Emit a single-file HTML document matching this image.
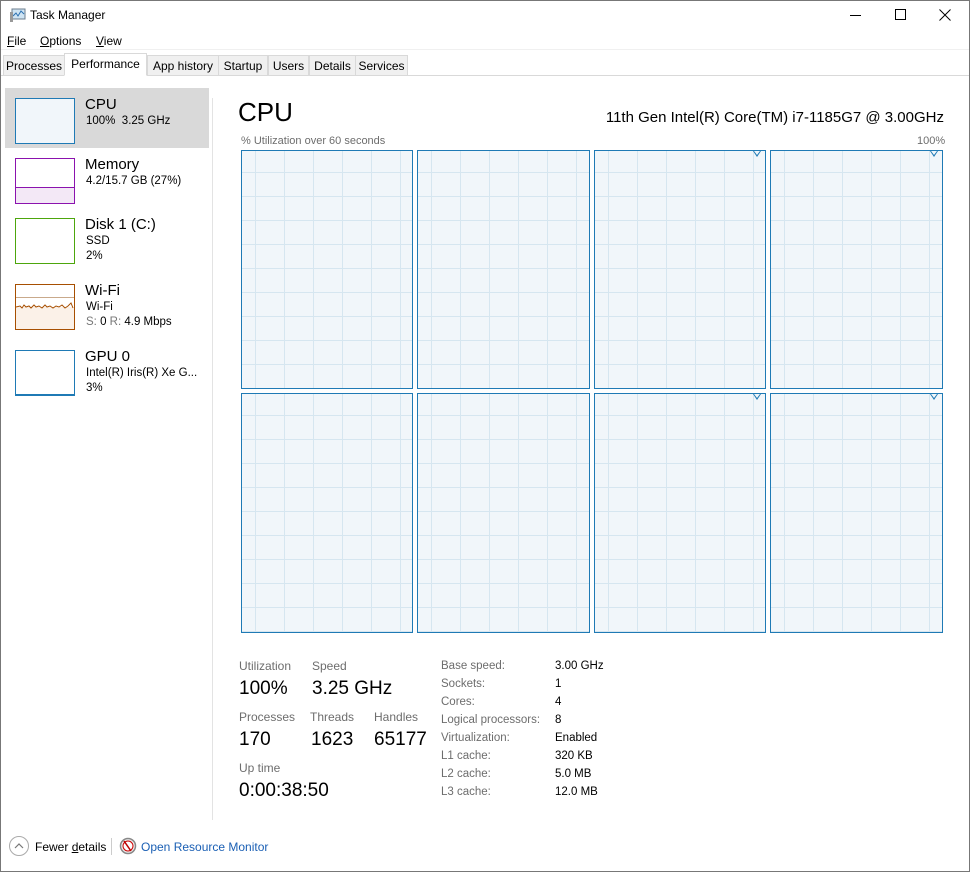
<!DOCTYPE html><html><head><style>
*{margin:0;padding:0;box-sizing:border-box}
body{width:970px;height:872px;background:#fff;font-family:"Liberation Sans",sans-serif;position:relative;overflow:hidden}
.a{position:absolute;white-space:nowrap}
.g{position:absolute;border:1px solid #1f7ab5;background-color:#f1f6fa;background-image:linear-gradient(90deg,#d6e6f0 1px,transparent 1px),linear-gradient(#d6e6f0 1px,transparent 1px);background-size:29px 24px;background-position:13px 21px}
.tab{position:absolute;top:55px;height:21px;border:1px solid #d9d9d9;background:#f0f0f0;font-size:12px;padding:3px 0 0;text-align:center;color:#000}
.th{position:absolute;border:1px solid;width:60px;height:46px;left:15px}
.s{font-size:12px;color:#6d6d6d}
.b{font-size:19px;color:#000}
.k{font-size:11.5px;color:#6d6d6d}
.v{font-size:11.5px;color:#000}
.tri{position:absolute;top:0;right:4px;width:0;height:0;border-left:4px solid transparent;border-right:4px solid transparent;border-top:6px solid #1f7ab5}
.tri:after{content:"";position:absolute;left:-3px;top:-6px;border-left:3px solid transparent;border-right:3px solid transparent;border-top:4px solid #f1f6fa}
</style></head><body>
<div class="a" style="left:0;top:0;width:970px;height:872px;border:1px solid #777"></div>
<svg class="a" style="left:9px;top:8px" width="17" height="15"><rect x="3" y="1" width="13" height="10" fill="#cfe4f3" stroke="#6b7d8c"/><polyline points="4,8 7,5 9,8 12,3 15,6" fill="none" stroke="#2a6fb0"/><rect x="1" y="4" width="3" height="10" fill="#999"/></svg>
<div class="a" style="left:30px;top:8px;font-size:12px">Task Manager</div>
<div class="a" style="left:850px;top:15px;width:11px;height:1px;background:#000"></div>
<div class="a" style="left:895px;top:9px;width:11px;height:11px;border:1px solid #000"></div>
<svg class="a" style="left:939px;top:9px" width="12" height="12"><path d="M0.5 0.5L11.5 11.5M11.5 0.5L0.5 11.5" stroke="#000" stroke-width="1"/></svg>
<div class="a" style="left:7px;top:34px;font-size:12px"><u>F</u>ile</div>
<div class="a" style="left:40px;top:34px;font-size:12px"><u>O</u>ptions</div>
<div class="a" style="left:96px;top:34px;font-size:12px"><u>V</u>iew</div>
<div class="a" style="left:1px;top:49px;width:968px;height:1px;background:#f0f0f0"></div>
<div class="a" style="left:1px;top:75px;width:968px;height:1px;background:#d9d9d9"></div>
<div class="tab" style="left:3px;width:62px">Processes</div>
<div class="tab" style="left:64px;top:53px;height:23px;width:83px;background:#fff;border-bottom-color:#fff">Performance</div>
<div class="tab" style="left:147px;width:72px">App history</div>
<div class="tab" style="left:218px;width:50px">Startup</div>
<div class="tab" style="left:268px;width:41px">Users</div>
<div class="tab" style="left:309px;width:47px">Details</div>
<div class="tab" style="left:355px;width:53px">Services</div>
<div class="a" style="left:5px;top:88px;width:204px;height:60px;background:#d9d9d9"></div>
<div class="a" style="left:212px;top:98px;width:1px;height:722px;background:#e3e3e3"></div>
<div class="th" style="top:98px;border-color:#1f7ab5;background:#f1f6fa"></div>
<div class="a" style="left:85px;top:96px;font-size:15px">CPU</div><div class="a" style="left:86px;top:115px;font-size:11.5px">100%&nbsp; 3.25 GHz</div>
<div class="th" style="top:158px;border-color:#8b12ae;background:linear-gradient(transparent 28px,#8b12ae 28px,#8b12ae 29px,#f3e8f6 29px)"></div>
<div class="a" style="left:85px;top:156px;font-size:15px">Memory</div><div class="a" style="left:86px;top:175px;font-size:11.5px">4.2/15.7 GB (27%)</div>
<div class="th" style="top:218px;border-color:#4da60c"></div>
<div class="a" style="left:85px;top:216px;font-size:15px">Disk 1 (C:)</div><div class="a" style="left:86px;top:235px;font-size:11.5px">SSD</div><div class="a" style="left:86px;top:250px;font-size:11.5px">2%</div>
<div class="th" style="top:284px;border-color:#a74f01;background:linear-gradient(transparent 12px,#c9a98b 12px,#c9a98b 13px,transparent 13px,transparent 22px,#fbf1e8 22px)"></div>
<svg class="a" style="left:16px;top:300px" width="58" height="12"><polyline fill="none" stroke="#a74f01" points="0,7 4,6 6,8 8,5 10,7 13,6 15,8 18,5 20,7 23,6 26,8 29,5 31,7 34,6 37,8 40,6 43,7 46,5 49,8 52,6 55,3 57,8"/></svg>
<div class="a" style="left:85px;top:282px;font-size:15px">Wi-Fi</div><div class="a" style="left:86px;top:301px;font-size:11.5px">Wi-Fi</div><div class="a" style="left:86px;top:316px;font-size:11.5px"><span style="color:#777">S:</span> 0 <span style="color:#777">R:</span> 4.9 Mbps</div>
<div class="th" style="top:350px;border-color:#1f7ab5;border-bottom-width:2px"></div>
<div class="a" style="left:85px;top:348px;font-size:15px">GPU 0</div><div class="a" style="left:86px;top:367px;font-size:11.5px">Intel(R) Iris(R) Xe G...</div><div class="a" style="left:86px;top:382px;font-size:11.5px">3%</div>
<div class="a" style="left:238px;top:97px;font-size:26px">CPU</div>
<div class="a" style="right:26px;top:109px;font-size:15px">11th Gen Intel(R) Core(TM) i7-1185G7 @ 3.00GHz</div>
<div class="a s" style="left:241px;top:135px;font-size:11px">% Utilization over 60 seconds</div>
<div class="a s" style="left:917px;top:135px;font-size:11px">100%</div>
<div class="g" style="left:241px;top:150px;width:172px;height:239px"></div>
<div class="g" style="left:417px;top:150px;width:173px;height:239px"></div>
<div class="g" style="left:594px;top:150px;width:172px;height:239px"><div class="tri"></div></div>
<div class="g" style="left:770px;top:150px;width:173px;height:239px"><div class="tri"></div></div>
<div class="g" style="left:241px;top:393px;width:172px;height:240px"></div>
<div class="g" style="left:417px;top:393px;width:173px;height:240px"></div>
<div class="g" style="left:594px;top:393px;width:172px;height:240px"><div class="tri"></div></div>
<div class="g" style="left:770px;top:393px;width:173px;height:240px"><div class="tri"></div></div>
<div class="a s" style="left:239px;top:659px">Utilization</div><div class="a s" style="left:312px;top:659px">Speed</div>
<div class="a b" style="left:239px;top:678px">100%</div><div class="a b" style="left:312px;top:678px">3.25 GHz</div>
<div class="a s" style="left:239px;top:710px">Processes</div><div class="a s" style="left:310px;top:710px">Threads</div><div class="a s" style="left:374px;top:710px">Handles</div>
<div class="a b" style="left:239px;top:729px">170</div><div class="a b" style="left:311px;top:729px">1623</div><div class="a b" style="left:374px;top:729px">65177</div>
<div class="a s" style="left:239px;top:761px">Up time</div>
<div class="a b" style="left:239px;top:780px">0:00:38:50</div>
<div class="a k" style="left:441px;top:657px;line-height:18px">Base speed:<br>Sockets:<br>Cores:<br>Logical processors:<br>Virtualization:<br>L1 cache:<br>L2 cache:<br>L3 cache:</div>
<div class="a v" style="left:555px;top:657px;line-height:18px">3.00 GHz<br>1<br>4<br>8<br>Enabled<br>320 KB<br>5.0 MB<br>12.0 MB</div>
<div class="a" style="left:9px;top:836px;width:20px;height:20px;border:1px solid #aaa;border-radius:50%"></div>
<svg class="a" style="left:13px;top:841px" width="12" height="10"><polyline points="2,7 6,3 10,7" fill="none" stroke="#777" stroke-width="1.2"/></svg>
<div class="a" style="left:35px;top:840px;font-size:12px">Fewer <u>d</u>etails</div>
<div class="a" style="left:111px;top:838px;width:1px;height:17px;background:#ccc"></div>
<svg class="a" style="left:119px;top:837px" width="18" height="18"><circle cx="9" cy="9" r="7.5" fill="#eee" stroke="#888" stroke-width="1.5"/><circle cx="9" cy="9" r="5" fill="#fff" stroke="#c00"/><line x1="5" y1="4" x2="12" y2="14" stroke="#b00" stroke-width="1.5"/></svg>
<div class="a" style="left:141px;top:840px;font-size:12px;color:#1a5fb4">Open Resource Monitor</div>
</body></html>
